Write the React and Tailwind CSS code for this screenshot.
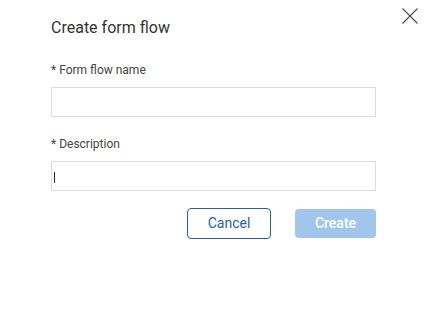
export default function App() {
  return (
    <div className="relative h-[310px] w-[428px] overflow-hidden bg-white font-['Roboto',sans-serif] text-[#333]">
      <button className="absolute left-[402px] top-[8px] h-4 w-4 text-[#555]" aria-label="Close">
        <svg width="16" height="16" viewBox="0 0 16 16" fill="none" stroke="currentColor" strokeWidth="1.3">
          <path d="M0.5 0.5 L15.5 15.5 M15.5 0.5 L0.5 15.5" />
        </svg>
      </button>

      <div className="flex w-[376px] flex-col pl-[51px] pt-[16px]">
        <h2 className="text-[16px] leading-[24px] font-normal text-[#333]">Create form flow</h2>

        <label className="mt-[22px] text-[12px] leading-[16px] text-[#444]">* Form flow name</label>
        <input className="mt-[9px] h-[30px] w-[325px] border border-[#dcdcdc] bg-white px-2 text-[13px] outline-none" />

        <label className="mt-[19px] text-[12px] leading-[16px] text-[#444]">* Description</label>
        <div className="relative mt-[9px] h-[30px] w-[325px] border border-[#dcdcdc] bg-white">
          <span className="absolute left-[2px] top-[10px] h-[11px] w-px bg-[#333]" />
        </div>

        <div className="mt-[17px] flex items-center justify-end gap-[24px]">
          <button className="h-[31px] w-[84px] rounded-[4px] border border-[#2a5fa6] bg-white text-[14px] text-[#2a5fa6]">
            Cancel
          </button>
          <button className="h-[29px] w-[81px] rounded-[4px] bg-[#a2c5ec] text-[14px] font-medium text-white">
            Create
          </button>
        </div>
      </div>
    </div>
  )
}
